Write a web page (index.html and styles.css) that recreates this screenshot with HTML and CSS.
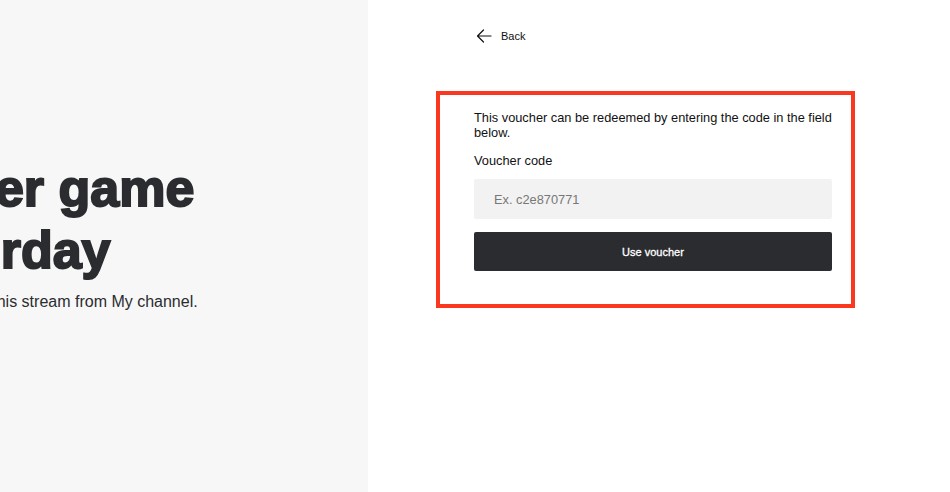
FILE: index.html
```html
<!DOCTYPE html>
<html lang="en">
<head>
<meta charset="utf-8">
<title>Redeem voucher</title>
<link rel="stylesheet" href="styles.css">
</head>
<body>
<div class="page">
  <section class="hero">
    <div class="hero-content">
      <h1 class="hero-title">Power game<br>Saturday</h1>
      <p class="hero-sub">Get access to this stream from My channel.</p>
    </div>
  </section>
  <main class="side">
    <a class="back" href="#">
      <svg class="back-icon" width="16" height="14" viewBox="0 0 16 14" aria-hidden="true">
        <path d="M15 7H1.5M7.5 1L1.5 7l6 6" fill="none" stroke="#111" stroke-width="1.2" stroke-linecap="round" stroke-linejoin="round"/>
      </svg>
      <span>Back</span>
    </a>
    <div class="voucher">
      <p class="voucher-text">This voucher can be redeemed by entering the code in the field below.</p>
      <label class="voucher-label" for="code">Voucher code</label>
      <input class="voucher-input" id="code" type="text" placeholder="Ex. c2e870771">
      <button class="voucher-btn" type="button">Use voucher</button>
    </div>
  </main>
</div>
</body>
</html>
```
FILE: styles.css
```css
* { box-sizing: border-box; }
html, body {
  margin: 0;
  padding: 0;
  height: 100%;
  background: #ffffff;
  font-family: "Liberation Sans", Arial, sans-serif;
  color: #111111;
}
.page {
  display: flex;
  height: 492px;
}
.hero {
  width: 368px;
  flex: 0 0 368px;
  background: #f7f7f7;
  overflow: hidden;
  padding-top: 157px;
}
.hero-content {
  margin-left: -112px;
  width: 700px;
  white-space: nowrap;
  color: #2b2c30;
}
.hero-title {
  margin: 0;
  font-size: 52px;
  line-height: 62px;
  font-weight: 700;
  color: #2b2c30;
  -webkit-text-stroke: 2px #2b2c30;
}
.hero-sub {
  margin: 11px 0 0 2px;
  font-size: 16px;
  line-height: 20px;
  color: #2b2c30;
}
.side {
  flex: 1;
  padding-top: 29px;
  padding-left: 68px;
}
.back {
  display: flex;
  align-items: center;
  gap: 9px;
  margin-left: 40px;
  height: 14px;
  font-size: 11px;
  line-height: 14px;
  color: #111111;
  text-decoration: none;
}
.back-icon { display: block; }
.voucher {
  margin-top: 48px;
  width: 419px;
  border: 4px solid #f9381f;
  padding: 15px 19px 33px 34px;
  display: flex;
  flex-direction: column;
}
.voucher-text {
  margin: 0;
  font-size: 12.8px;
  line-height: 15px;
  color: #111111;
}
.voucher-label {
  margin-top: 13px;
  font-size: 12.8px;
  line-height: 16px;
  color: #111111;
}
.voucher-input {
  margin-top: 10px;
  height: 40px;
  border: none;
  border-radius: 2px;
  background: #f2f2f2;
  padding: 0 20px;
  font-family: inherit;
  font-size: 12.8px;
  color: #111111;
  outline: none;
}
.voucher-input::placeholder { color: #777777; }
.voucher-btn {
  margin-top: 13px;
  height: 39px;
  border: none;
  border-radius: 2px;
  background: #2b2c30;
  color: #ffffff;
  font-family: inherit;
  font-size: 11px;
  font-weight: 400;
  -webkit-text-stroke: 0.3px #ffffff;
  cursor: pointer;
}
```
